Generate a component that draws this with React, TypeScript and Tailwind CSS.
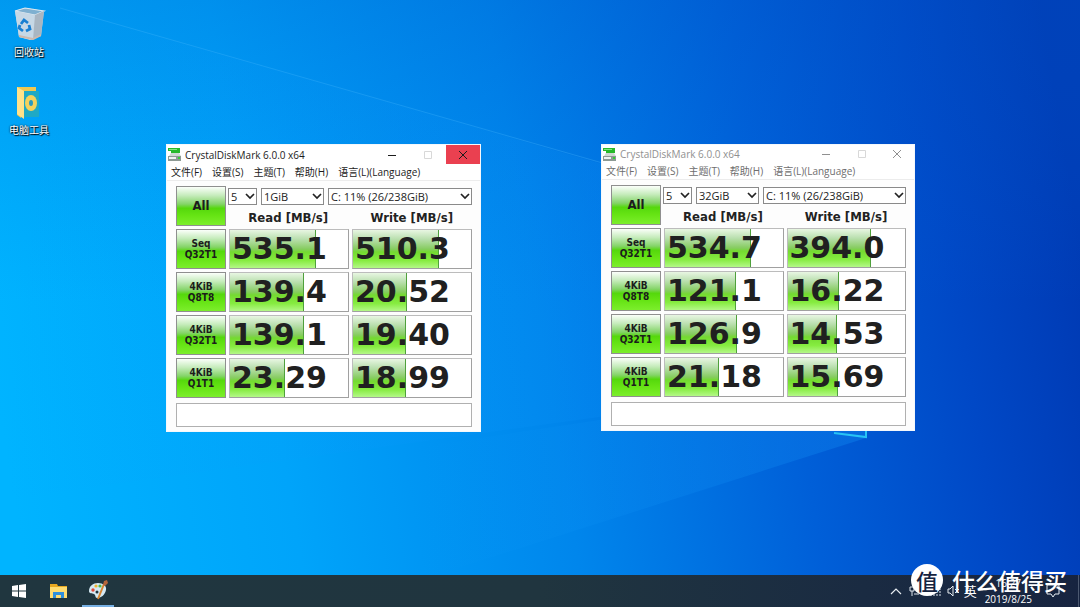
import React from "react";

type Row = { label: string[]; read: string; write: string; readBar: number; writeBar: number };

const UI = "font-['Open_Sans','Noto_Sans_CJK_SC',sans-serif]";
const TAHOMA = "font-['DejaVu_Sans_Condensed','DejaVu_Sans',sans-serif]";
const GREEN =
  "bg-[linear-gradient(180deg,#fbfffa_0%,#c6ecbc_22%,#84d468_45%,#55d80c_56%,#66e414_75%,#7cee2c_100%)]";
const BAR =
  "bg-[linear-gradient(180deg,#e8f6e2_0%,#b9dfae_24%,#86cc60_50%,#74da30_58%,#86ec40_80%,#b4f888_100%)]";

const leftRows: Row[] = [
  { label: ["Seq", "Q32T1"], read: "535.1", write: "510.3", readBar: 88, writeBar: 88 },
  { label: ["4KiB", "Q8T8"], read: "139.4", write: "20.52", readBar: 75, writeBar: 55 },
  { label: ["4KiB", "Q32T1"], read: "139.1", write: "19.40", readBar: 75, writeBar: 54 },
  { label: ["4KiB", "Q1T1"], read: "23.29", write: "18.99", readBar: 56, writeBar: 54 },
];

const rightRows: Row[] = [
  { label: ["Seq", "Q32T1"], read: "534.7", write: "394.0", readBar: 88, writeBar: 85 },
  { label: ["4KiB", "Q8T8"], read: "121.1", write: "16.22", readBar: 73, writeBar: 53 },
  { label: ["4KiB", "Q32T1"], read: "126.9", write: "14.53", readBar: 74, writeBar: 51 },
  { label: ["4KiB", "Q1T1"], read: "21.18", write: "15.69", readBar: 55, writeBar: 52 },
];

const menus = ["文件(F)", "设置(S)", "主题(T)", "帮助(H)", "语言(L)(Language)"];

function Wallpaper() {
  return (
    <svg className="absolute inset-0 h-full w-full" viewBox="0 0 1080 607" preserveAspectRatio="none" aria-hidden="true">
      <defs>
        <linearGradient id="base" x1="0" y1="420" x2="1080" y2="240" gradientUnits="userSpaceOnUse">
          <stop offset="0" stopColor="#00b4ff" />
          <stop offset="0.25" stopColor="#00a4fa" />
          <stop offset="0.5" stopColor="#0086ec" />
          <stop offset="0.72" stopColor="#005fd8" />
          <stop offset="0.88" stopColor="#0048c6" />
          <stop offset="1" stopColor="#003ab4" />
        </linearGradient>
        <linearGradient id="shade" x1="0" y1="0" x2="0" y2="1">
          <stop offset="0" stopColor="#0058c8" stopOpacity="0.26" />
          <stop offset="0.5" stopColor="#0070e0" stopOpacity="0" />
        </linearGradient>
        <linearGradient id="beam" x1="0" y1="0" x2="1" y2="0">
          <stop offset="0" stopColor="#1098ff" stopOpacity="0" />
          <stop offset="1" stopColor="#1098ff" stopOpacity="0.2" />
        </linearGradient>
        <linearGradient id="lowerBeam" x1="420" y1="0" x2="866" y2="0" gradientUnits="userSpaceOnUse">
          <stop offset="0" stopColor="#18a0ff" stopOpacity="0" />
          <stop offset="1" stopColor="#18a0ff" stopOpacity="0.26" />
        </linearGradient>
      </defs>
      <rect width="1080" height="607" fill="url(#base)" />
      <rect width="1080" height="607" fill="url(#shade)" />
      <path d="M60 8 L866 240 L866 380 L0 500Z" fill="url(#beam)" />
      <path d="M0 510 L866 380 L866 438 L420 580 L0 607Z" fill="url(#lowerBeam)" />
      <path d="M60 8 L620 168" stroke="#48b8ff" strokeOpacity="0.3" strokeWidth="1" />
      <path d="M834 433 L866 437 V425" fill="none" stroke="#27c3f5" strokeWidth="2" />
    </svg>
  );
}

function DiskIcon() {
  return (
    <svg className="h-[13px] w-[13px]" viewBox="0 0 13 13" aria-hidden="true">
      <path d="M0 0h12v5H3V3H0z" fill="#27b92b" />
      <path d="M1 1h8v1H1z" fill="#7fe87c" />
      <path d="M3 5h8l2 3H1z" fill="#cfd8d3" />
      <path d="M0 8h13v5H0z" fill="#8d9a94" />
      <path d="M1 9h7v2H1z" fill="#f0f4f2" />
      <path d="M10 9h2v2h-2z" fill="#35d035" />
    </svg>
  );
}

function Picker({ label, value, className }: { label: string; value: string; className: string }) {
  return (
    <div className={`relative h-[17px] ${className}`}>
      <select
        aria-label={label}
        defaultValue={value}
        className={`block h-[17px] w-full appearance-none border border-[#8a8a8a] bg-white pl-[2px] text-[11px] leading-[15px] text-[#222] ${UI}`}
      >
        <option>{value}</option>
      </select>
      <svg className="pointer-events-none absolute right-[2px] top-[5px] h-[7px] w-[10px]" viewBox="0 0 10 7" aria-hidden="true">
        <path d="M1 1l4 4 4-4" fill="none" stroke="#222" strokeWidth="1.7" />
      </svg>
    </div>
  );
}

function Meter({ value, bar }: { value: string; bar: number }) {
  return (
    <div className="relative h-10 border border-[#bcbcbc] border-b-[#a0a0a0] border-r-[#a0a0a0] bg-white">
      <div className={`absolute inset-y-0 left-0 border-r border-[#4fa03c] ${BAR}`} style={{ width: `${bar * 0.833}%` }} />
      <div className="relative pl-[2px] font-['DejaVu_Sans',sans-serif] text-[30px] font-bold leading-[38px] text-[#202020]">
        {value}
      </div>
    </div>
  );
}

function BenchWindow({
  rows,
  size,
  active,
  className,
}: {
  rows: Row[];
  size: string;
  active: boolean;
  className: string;
}) {
  const ink = active ? "text-[#1c1c1c]" : "text-[#909090]";
  const menuInk = active ? "text-[#1c1c1c]" : "text-[#6e6e6e]";
  const bar = active ? "h-[19px]" : "h-[18px]";
  return (
    <section aria-label="CrystalDiskMark" className={`absolute border border-[#f4f8fc] bg-[#fdfdfd] ${className}`}>
      <header className={`flex items-center bg-white ${bar} ${UI} ${ink}`}>
        <span className="pl-px">
          <DiskIcon />
        </span>
        <h1 className="flex-1 pl-1 text-[10px] leading-4">CrystalDiskMark 6.0.0 x64</h1>
        <button aria-label="最小化" className="flex h-full w-9 items-center justify-center">
          <svg className="h-[10px] w-[10px]" viewBox="0 0 10 10"><path d="M1 5.500h8" stroke="currentColor" /></svg>
        </button>
        <button aria-label="最大化" className="flex h-full w-9 items-center justify-center">
          <svg className="h-[10px] w-[10px]" viewBox="0 0 10 10"><path d="M1.500 1.500h7v7h-7z" fill="none" stroke="#d8d8d8" /></svg>
        </button>
        <button aria-label="关闭" className={`flex h-full w-[34px] items-center justify-center ${active ? "bg-[#ea4050]" : ""}`}>
          <svg className="h-[10px] w-[10px]" viewBox="0 0 10 10"><path d="M1 1l8 8M9 1l-8 8" stroke="currentColor" /></svg>
        </button>
      </header>
      <nav className={`flex h-[17px] gap-[10px] border-b border-[#ececec] bg-white pl-1 text-[10px] leading-4 ${UI} ${menuInk}`}>
        {menus.map((m) => (
          <button key={m} className="whitespace-nowrap">{m}</button>
        ))}
      </nav>
      <div className="pb-1 pl-[9px] pr-2 pt-[5px]">
        <div className="grid grid-cols-[50px_1fr] gap-x-[2px]">
          <button className={`h-10 border border-[#8f8f8f] text-[13px] font-bold text-[#1c1c1c] ${GREEN} ${TAHOMA}`}>All</button>
          <div className="pt-[2px]">
            <div className="flex gap-1">
              <Picker label="次数" value="5" className="w-[29px]" />
              <Picker label="大小" value={size} className="w-[63px]" />
              <Picker label="驱动器" value="C: 11% (26/238GiB)" className="flex-1" />
            </div>
            <div className={`grid grid-cols-2 gap-x-[3px] pt-[3px] text-center text-[13px] font-bold leading-5 text-[#222] ${TAHOMA}`}>
              <span>Read [MB/s]</span>
              <span>Write [MB/s]</span>
            </div>
          </div>
        </div>
        <div className="flex flex-col gap-[3px] pt-px">
          {rows.map((r) => (
            <div key={r.label.join()} className="grid grid-cols-[50px_1fr_1fr] gap-x-[3px]">
              <button className={`h-10 border border-[#8f8f8f] text-[10px] font-bold leading-[11px] text-[#1c1c1c] ${GREEN} ${TAHOMA}`}>
                {r.label[0]}
                <br />
                {r.label[1]}
              </button>
              <Meter value={r.read} bar={r.readBar} />
              <Meter value={r.write} bar={r.writeBar} />
            </div>
          ))}
        </div>
        <input aria-label="备注" className="mt-[5px] block h-6 w-full border border-[#b0b0b0] bg-white" />
      </div>
    </section>
  );
}

function RecycleBin() {
  return (
    <svg className="h-9 w-9" viewBox="0 0 36 36" aria-hidden="true">
      <path d="M4 5 L14 2 L33 5 L30 30 L19 34 L8 31Z" fill="#c9d6e0" />
      <path d="M4 5 L14 2 L33 5 L24 9Z" fill="#7fb0d0" stroke="#dce8f0" strokeWidth="1.2" />
      <path d="M4 5 L24 9 L22 34 L8 31Z" fill="#c6d8e6" />
      <path d="M24 9 L33 5 L30 30 L22 34Z" fill="#a9b6c2" />
      <path d="M8 29l14 3 8-4v2l-8 4-14-3z" fill="#cdb9ad" />
      <g fill="none" stroke="#187fd2" strokeWidth="2.8">
        <path d="M10 18l3-4 4 3" />
        <path d="M18 19l1 4-4 2" />
        <path d="M12 25l-4-3 1-3" />
      </g>
    </svg>
  );
}

function ToolFolder() {
  return (
    <svg className="h-9 w-9" viewBox="0 0 36 36" aria-hidden="true">
      <path d="M6 3h19v4H10v27L6 31z" fill="#f0c850" />
      <path d="M12 7h16v26H12z" fill="#1fa9c4" />
      <ellipse cx="20" cy="19" rx="6" ry="8" fill="#f4d25c" />
      <ellipse cx="20" cy="19" rx="2" ry="3" fill="#2a9ac0" />
      <path d="M6 3l7 4v28l-7-5z" fill="#ffe28a" />
    </svg>
  );
}

function DesktopItem({ label, children }: { label: string; children: React.ReactNode }) {
  return (
    <button className="flex w-[58px] flex-col items-center">
      {children}
      <span className={`pt-[3px] text-[10px] leading-[14px] text-white [text-shadow:1px_1px_1px_#000,0_0_2px_#000] ${UI}`}>{label}</span>
    </button>
  );
}

function Taskbar() {
  return (
    <footer className={`relative flex h-8 items-stretch bg-[linear-gradient(90deg,#20363f_0%,#20353f_50%,#1a2b42_80%,#172440_100%)] text-white ${UI}`}>
      <button aria-label="开始" className="flex w-[38px] items-center justify-center">
        <svg className="h-[14px] w-[14px]" viewBox="0 0 14 14">
          <path d="M0 2l6-1v5.500H0zM7 .9L14 0v6.500H7zM0 7.500h6V13l-6-1zM7 7.500h7V14l-7-.9z" fill="#fff" />
        </svg>
      </button>
      <button aria-label="文件资源管理器" className="flex w-[42px] items-center justify-center">
        <svg className="h-4 w-[18px]" viewBox="0 0 18 16">
          <path d="M0 1h7l1 2h9v12H0z" fill="#e8a820" />
          <path d="M0 4h17v11H0z" fill="#ffdc70" />
          <path d="M3 9h11v6h-3v-3H6v3H3z" fill="#2f8fdc" />
        </svg>
      </button>
      <button aria-label="画图" className="ml-[2px] flex w-8 items-center justify-center border-b-2 border-[#76b0e4]">
        <svg className="h-5 w-5" viewBox="0 0 20 20">
          <path d="M10 3c5 0 9 3 8 7-1 5-5 8-9 8-2 0-1-3-3-4s-5 0-5-3c0-5 4-8 9-8z" fill="#d5e9f3" />
          <circle cx="5" cy="10" r="1.700" fill="#e0483a" />
          <circle cx="8" cy="6" r="1.600" fill="#f0b22e" />
          <circle cx="12" cy="6" r="1.600" fill="#51b748" />
          <circle cx="9" cy="12" r="1.500" fill="#20353f" />
          <path d="M10 19L16 4" stroke="#d98532" strokeWidth="2" />
          <path d="M15 5l1-4 3-1 1 3-3 3z" fill="#b5653a" />
        </svg>
      </button>
      <div className="ml-auto flex items-center">
        <svg className="mr-[7px] h-[10px] w-[12px]" viewBox="0 0 12 10" aria-hidden="true">
          <path d="M1 8l5-5 5 5" fill="none" stroke="#e8edf2" strokeWidth="1.200" />
        </svg>
        <svg className="h-3 w-8" viewBox="0 0 32 12" fill="none" stroke="#dfe6ee" aria-hidden="true">
          <path d="M1 2h4v4H1zM3 6v5M5 9h5" />
          <path d="M22 11v-2M25 11V8M28 11V6M31 11V4" strokeDasharray="2 1" />
        </svg>
        <svg className="ml-[6px] h-3 w-3" viewBox="0 0 12 12" fill="none" stroke="#e8edf2" aria-hidden="true">
          <path d="M1 4h2l3-3v10L3 8H1zM8 4l4 4M12 4L8 8" />
        </svg>
        <span className="ml-[5px] text-[13px] leading-8">英</span>
        <time className="ml-2 flex flex-col self-end text-center text-[10px] leading-4">
          <span>16:27</span>
          <span>2019/8/25</span>
        </time>
        <svg className="ml-[14px] mr-[18px] h-[14px] w-[14px]" viewBox="0 0 14 14" fill="none" stroke="#e8edf2" aria-hidden="true">
          <path d="M1 1h12v9H9l-2 3-2-3H1z" />
        </svg>
        <span className="h-8 w-[2px] border-l border-[#4b5870]" />
      </div>
    </footer>
  );
}

function Watermark() {
  return (
    <div className="pointer-events-none absolute bottom-[11px] right-[13px] flex items-center gap-[9px] font-['Noto_Sans_CJK_SC',sans-serif] font-medium">
      <span className="flex h-8 w-8 items-center justify-center rounded-full bg-white text-[22px] leading-8 text-[#15233f]">值</span>
      <span className="text-[23px] leading-8 text-white">什么值得买</span>
    </div>
  );
}

export default function App() {
  return (
    <div className="relative flex min-h-screen flex-col overflow-hidden bg-[#0088f0]">
      <Wallpaper />
      <main className="relative flex-1">
        <div className="flex flex-col gap-[25px] pt-[6px]">
          <DesktopItem label="回收站"><RecycleBin /></DesktopItem>
          <DesktopItem label="电脑工具"><ToolFolder /></DesktopItem>
        </div>
        <BenchWindow rows={leftRows} size="1GiB" active className="left-[166px] top-[144px] w-[315px]" />
        <BenchWindow rows={rightRows} size="32GiB" active={false} className="left-[601px] top-[144px] w-[314px]" />
      </main>
      <Taskbar />
      <Watermark />
    </div>
  );
}
